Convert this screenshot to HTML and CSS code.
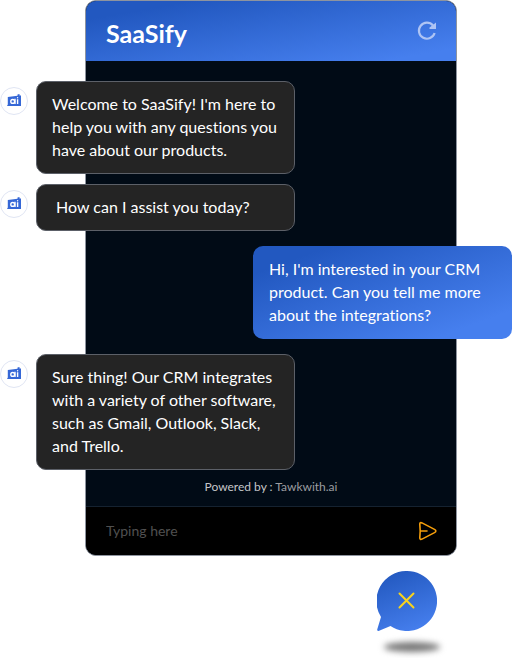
FILE: index.html
```html
<!DOCTYPE html>
<html lang="en">
<head>
<meta charset="utf-8">
<meta name="viewport" content="width=device-width, initial-scale=1">
<title>SaaSify chat</title>
<link rel="stylesheet" href="styles.css">
</head>
<body>
<svg class="defs" aria-hidden="true">
  <symbol id="bot" viewBox="0 0 14 14">
    <path fill="#3567d6" d="M.8 3 10.500 1.800V.6l2-.6v1.600l1.500-.2V12H0l.8-1.500z"/>
    <path fill="none" stroke="#fff" stroke-width="1.400" d="M8 4.800v5.200M10.600 5.200v4.800"/>
    <circle cx="5.700" cy="7.400" r="1.900" fill="none" stroke="#fff" stroke-width="1.400"/>
    <circle cx="10.600" cy="3.700" r=".7" fill="#fff"/>
  </symbol>
</svg>
<main class="widget">
  <section class="panel">
    <header class="header">
      <h1 class="title">SaaSify</h1>
      <button class="icon-button" type="button" aria-label="Restart chat">
        <svg width="20" height="20" viewBox="0 0 20 20" fill="none" stroke="#aec4f4" stroke-width="2.200">
          <path d="M17.600 12A8 8 0 1 1 16 4.500"/>
          <path d="M16.500 3.500 19 1.500V8h-6.500V6.500z" fill="#aec4f4" stroke="none"/>
        </svg>
      </button>
    </header>
    <div class="messages">
      <div class="group">
        <div class="row">
          <span class="avatar"><svg width="14" height="14"><use href="#bot"/></svg></span>
          <p class="bubble">Welcome to SaaSify! I'm here to<br>help you with any questions you<br>have about our products.</p>
        </div>
        <div class="row">
          <span class="avatar"><svg width="14" height="14"><use href="#bot"/></svg></span>
          <p class="bubble">&nbsp;How can I assist you today?</p>
        </div>
      </div>
      <div class="row row-user">
        <p class="bubble bubble-user">Hi, I'm interested in your CRM<br>product. Can you tell me more<br>about the integrations?</p>
      </div>
      <div class="row">
        <span class="avatar"><svg width="14" height="14"><use href="#bot"/></svg></span>
        <p class="bubble">Sure thing! Our CRM integrates<br>with a variety of other software,<br>such as Gmail, Outlook, Slack,<br>and Trello.</p>
      </div>
    </div>
    <p class="powered">Powered by : <span class="brand">Tawkwith.ai</span></p>
    <form class="composer">
      <input class="input" type="text" placeholder="Typing here" aria-label="Message">
      <button class="icon-button" type="button" aria-label="Send">
        <svg width="20" height="20" viewBox="0 0 20 20" fill="none" stroke="#f59e0b" stroke-width="1.600" stroke-linecap="round" stroke-linejoin="round">
          <path d="M2.200 10H9M2.200 10 1.800 3.200C1.700 1.700 2.700 1.300 4 1.900L16.500 8.400C18.300 9.300 18.300 10.700 16.500 11.600L4 18.100C2.700 18.700 1.700 18.300 1.800 16.800Z"/>
        </svg>
      </button>
    </form>
  </section>
  <div class="launcher">
    <button class="launcher-button" type="button" aria-label="Close chat">
      <svg width="60" height="60" viewBox="0 0 60 60">
        <defs>
          <linearGradient id="blue" x1=".3" y1="0" x2=".7" y2="1">
            <stop offset="0" stop-color="#2359c0"/>
            <stop offset="1" stop-color="#467fee"/>
          </linearGradient>
        </defs>
        <path fill="url(#blue)" d="M30 0A30 30 0 1 1 13.500 55L1.500 60Q0 60 .2 58.500L4 46A30 30 0 0 1 30 0Z"/>
        <path d="m22.500 22.500 14 14m0-14-14 14" fill="none" stroke="#f8d31c" stroke-width="2" stroke-linecap="round"/>
      </svg>
    </button>
    <div class="shadow"></div>
  </div>
</main>
</body>
</html>
```
FILE: styles.css
```css
* {
  box-sizing: border-box;
}

body {
  margin: 0;
  background: #fff;
  font-family: Lato, "Liberation Sans", sans-serif;
  font-variant-ligatures: none;
}

h1,
p {
  margin: 0;
}

button {
  padding: 0;
  border: 0;
  background: none;
  cursor: pointer;
}

svg {
  display: block;
}

.defs {
  position: absolute;
  width: 0;
  height: 0;
}

.widget {
  padding: 0 55px 6px 85px;
}

.panel {
  border: 1px solid #8e949f;
  border-radius: 11px;
  background: #010b16;
}

.header {
  display: flex;
  align-items: center;
  justify-content: space-between;
  height: 60px;
  padding: 0 19px 0 20px;
  border-radius: 10px 10px 0 0;
  background: linear-gradient(170deg, #2258c0 15%, #467fee 90%);
}

.title {
  padding-top: 4px;
  color: #fff;
  font-size: 25px;
  line-height: 32px;
  font-weight: 700;
}

.messages {
  display: flex;
  flex-direction: column;
  gap: 15px;
  margin: 0 -56px 0 -86px;
  padding-top: 20px;
}

.group {
  display: flex;
  flex-direction: column;
  gap: 10px;
}

.row {
  display: flex;
  align-items: flex-start;
  gap: 8px;
}

.row-user {
  justify-content: flex-end;
}

.avatar {
  display: grid;
  place-items: center;
  width: 28px;
  height: 28px;
  margin-top: 6px;
  border: 1px solid #e0e5f3;
  border-radius: 50%;
  background: #fff;
}

.bubble {
  width: 259px;
  padding: 10px 0 12px 15px;
  border: 1px solid #5c6068;
  border-radius: 10px;
  background: #242424;
  color: #fff;
  font-size: 16px;
  line-height: 23px;
  white-space: nowrap;
}

.bubble-user {
  border: 0;
  padding: 11px 0 13px 16px;
  background: linear-gradient(160deg, #2258c0 15%, #467fee 85%);
}

.powered {
  padding: 9px 0 11px;
  color: #c4c6c9;
  font-size: 12px;
  line-height: 16px;
  text-align: center;
}

.brand {
  color: #9b9da0;
}

.composer {
  display: flex;
  align-items: center;
  height: 49px;
  padding: 0 18px 0 20px;
  border-top: 1px solid #152230;
  border-radius: 0 0 10px 10px;
  background: #000;
}

.input {
  flex: 1;
  min-width: 0;
  padding: 0;
  border: 0;
  outline: 0;
  background: none;
  color: #fff;
  font: 14px/20px Lato, "Liberation Sans", sans-serif;
}

.input::placeholder {
  color: #505050;
  opacity: 1;
}

.launcher {
  display: flex;
  flex-direction: column;
  align-items: flex-end;
  gap: 11px;
  padding: 15px 17px 0 0;
}

.launcher-button {
  margin-right: 3px;
}

.shadow {
  width: 56px;
  height: 10px;
  border-radius: 50%;
  background: #777;
  filter: blur(3px);
}
```
